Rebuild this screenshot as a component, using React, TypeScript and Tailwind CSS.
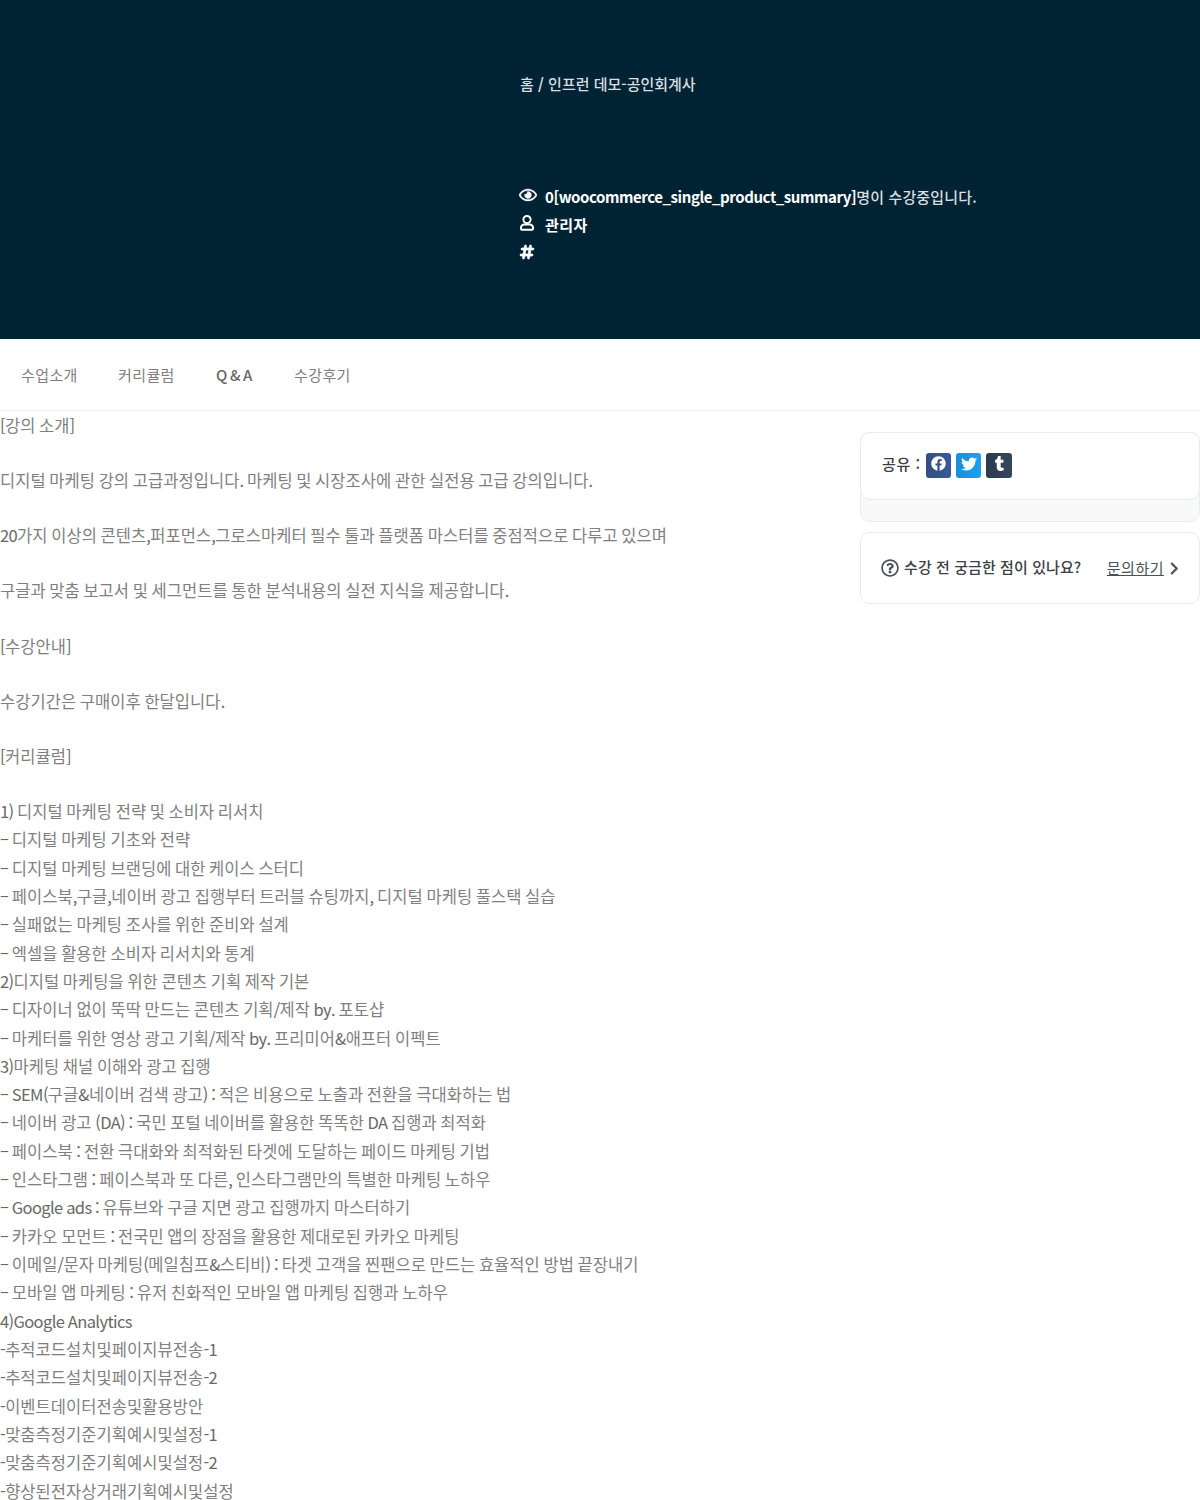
import { Fragment } from "react";
import { FaFacebook, FaTwitter, FaTumblr, FaRegEye, FaRegQuestionCircle } from "react-icons/fa";
import { FaHashtag, FaChevronRight } from "react-icons/fa6";

const intro = [
  "[강의 소개]",
  "디지털 마케팅 강의 고급과정입니다. 마케팅 및 시장조사에 관한 실전용 고급 강의입니다.",
  "20가지 이상의 콘텐츠,퍼포먼스,그로스마케터 필수 툴과 플랫폼 마스터를 중점적으로 다루고 있으며",
  "구글과 맞춤 보고서 및 세그먼트를 통한 분석내용의 실전 지식을 제공합니다.",
  "[수강안내]",
  "수강기간은 구매이후 한달입니다.",
  "[커리큘럼]",
];

const curriculum = [
  "1) 디지털 마케팅 전략 및 소비자 리서치",
  "– 디지털 마케팅 기초와 전략",
  "– 디지털 마케팅 브랜딩에 대한 케이스 스터디",
  "– 페이스북,구글,네이버 광고 집행부터 트러블 슈팅까지, 디지털 마케팅 풀스택 실습",
  "– 실패없는 마케팅 조사를 위한 준비와 설계",
  "– 엑셀을 활용한 소비자 리서치와 통계",
  "2)디지털 마케팅을 위한 콘텐츠 기획 제작 기본",
  "– 디자이너 없이 뚝딱 만드는 콘텐츠 기획/제작 by. 포토샵",
  "– 마케터를 위한 영상 광고 기획/제작 by. 프리미어&애프터 이펙트",
  "3)마케팅 채널 이해와 광고 집행",
  "– SEM(구글&네이버 검색 광고) : 적은 비용으로 노출과 전환을 극대화하는 법",
  "– 네이버 광고 (DA) : 국민 포털 네이버를 활용한 똑똑한 DA 집행과 최적화",
  "– 페이스북 : 전환 극대화와 최적화된 타겟에 도달하는 페이드 마케팅 기법",
  "– 인스타그램 : 페이스북과 또 다른, 인스타그램만의 특별한 마케팅 노하우",
  "– Google ads : 유튜브와 구글 지면 광고 집행까지 마스터하기",
  "– 카카오 모먼트 : 전국민 앱의 장점을 활용한 제대로된 카카오 마케팅",
  "– 이메일/문자 마케팅(메일침프&스티비) : 타겟 고객을 찐팬으로 만드는 효율적인 방법 끝장내기",
  "– 모바일 앱 마케팅 : 유저 친화적인 모바일 앱 마케팅 집행과 노하우",
  "4)Google Analytics",
  "-추적코드설치및페이지뷰전송-1",
  "-추적코드설치및페이지뷰전송-2",
  "-이벤트데이터전송및활용방안",
  "-맞춤측정기준기획예시및설정-1",
  "-맞춤측정기준기획예시및설정-2",
  "-향상된전자상거래기획예시및설정",
];

/** Sets Latin letters, digits and punctuation tighter and darker than the Hangul around them. */
function Mixed({ text }: { text: string }) {
  return (
    <>
      {text.split(/([^가-힣]+)/).map((run, i) =>
        i % 2 ? (
          <span key={i} className="tracking-[-0.62px] text-[#686868] [word-spacing:-0.45px]">{run}</span>
        ) : (
          <Fragment key={i}>{run}</Fragment>
        ),
      )}
    </>
  );
}

function UserIcon() {
  return (
    <svg viewBox="0 0 14 16" className="h-[16px] w-[14px]" fill="none" stroke="currentColor" strokeWidth="2">
      <circle cx="7" cy="4.6" r="3.6" />
      <path d="M4.200 9.400h5.600c1.800 0 3.200 1.500 3.200 3.200v1.200c0 .5-.4.9-.9.9H1.900c-.5 0-.9-.4-.9-.9v-1.200c0-1.700 1.400-3.200 3.200-3.200z" />
    </svg>
  );
}

export default function App() {
  return (
    <div
      lang="ko"
      className="h-[1500px] w-[1200px] overflow-hidden bg-white font-['Noto_Sans_CJK_KR',sans-serif] text-[16.5px] text-[#7f7f7f] [font-feature-settings:'calt'_0]"
    >
      <header className="h-[339px] bg-[#002333] pl-[519px] pt-[70px] text-[15px] font-medium text-[#d8dee1]">
        <nav className="h-[28px] pl-px leading-[28px]">
          홈 <span className="font-bold">/</span> 인프런 데모-공인회계사
        </nav>
        <ul className="mt-[85px] leading-[28px] text-white">
          <li className="flex h-[28px]">
            <FaRegEye className="mt-[4px] h-[16px] w-[18px]" stroke="currentColor" strokeWidth={10} />
            <span className="ml-2 whitespace-nowrap tracking-[0.15px] text-[#d8dee1]">
              <b className="font-bold tracking-[-0.43px] text-white">0[woocommerce_single_product_summary]</b>명이 수강중입니다.
            </span>
          </li>
          <li className="flex h-[28px]">
            <span className="mt-[4px] w-[18px] pl-px"><UserIcon /></span>
            <b className="ml-2 font-bold tracking-[0.4px]">관리자</b>
          </li>
          <li className="flex h-[28px]">
            <FaHashtag className="ml-px mt-[5px] h-[16px] w-[14px] overflow-visible" stroke="currentColor" strokeWidth={24} />
          </li>
        </ul>
      </header>
      <nav className="flex h-[72px] items-center border-b border-[#f1f1f1] pl-[21px] pt-px text-[15px] tracking-[0.4px]">
        <span className="w-[97px]">수업소개</span>
        <span className="w-[98px]">커리큘럼</span>
        <span className="w-[78px] font-medium tracking-[-0.8px] text-[#686868]">Q &amp; A</span>
        <span>수강후기</span>
      </nav>
      <main className="flex">
        <article className="w-[860px] whitespace-nowrap leading-[28.33px] tracking-[0.07px]">
          {intro.map((t) => (
            <p key={t} className="mb-[26.8px]"><Mixed text={t} /></p>
          ))}
          {curriculum.map((t) => (
            <p key={t}><Mixed text={t} /></p>
          ))}
        </article>
        <aside className="w-[340px] pt-[21px] text-[15px] font-medium text-[#3b4045]">
          <div className="h-[90px] rounded-[10px] border border-[#e9ebed] bg-[#f8f9fb]">
            <div className="-mx-px -mt-px flex h-[68px] items-center rounded-[10px] border border-[#e9ebed] bg-white pb-[2px] pl-[21px]">
              <span className="w-[44px] pb-px tracking-[0.6px]">공유 :</span>
              <span className="flex gap-[5px] text-white">
                <span className="flex h-[25px] w-[25px] items-center justify-center rounded-[3px] bg-linear-to-r from-[#344e86] to-[#3b5998] pb-[3px]"><FaFacebook size={15} /></span>
                <span className="flex h-[25px] w-[25px] items-center justify-center rounded-[3px] bg-linear-to-r from-[#1a8cd8] to-[#1da1f2] pb-[3px]"><FaTwitter size={16} /></span>
                <span className="flex h-[25px] w-[26px] items-center justify-center rounded-[3px] bg-linear-to-r from-[#2c3a4d] to-[#35465c] pb-[3px]"><FaTumblr size={15} /></span>
              </span>
            </div>
          </div>
          <div className="mt-[10px] flex h-[72px] items-center rounded-[10px] border border-[#e9ebed] pb-px pl-[20px] pr-[19px]">
            <FaRegQuestionCircle size={18} className="text-[#495057]" />
            <span className="ml-[5px] tracking-[0.08px]">수강 전 궁금한 점이 있나요?</span>
            <span className="ml-auto flex items-center font-normal text-[#495057]">
              <span className="pt-px tracking-[0.5px] underline">문의하기</span>
              <FaChevronRight size={13} className="ml-[3px] mt-px" stroke="currentColor" strokeWidth={30} />
            </span>
          </div>
        </aside>
      </main>
    </div>
  );
}
